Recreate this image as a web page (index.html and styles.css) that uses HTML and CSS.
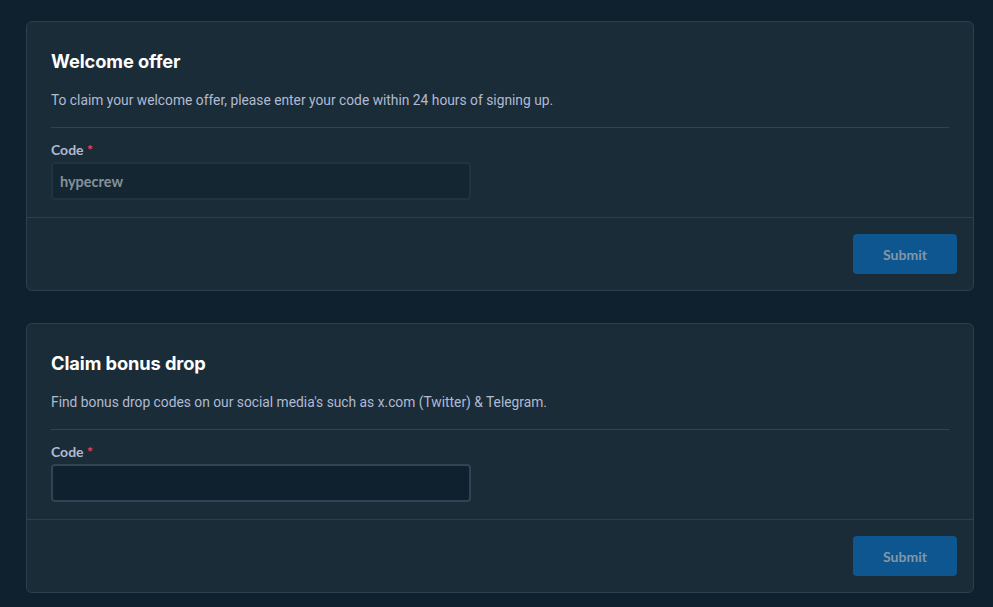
FILE: index.html
```html
<!DOCTYPE html>
<html lang="en">
<head>
<meta charset="utf-8">
<title>Offers</title>
<link rel="stylesheet" href="styles.css">
</head>
<body>
<main class="page">
  <section class="card">
    <div class="card-body">
      <h2 class="card-title">Welcome offer</h2>
      <p class="card-desc">To claim your welcome offer, please enter your code within 24 hours of signing up.</p>
      <hr class="divider">
      <label class="field">
        <span class="label">Code <span class="req">*</span></span>
        <input class="input input-disabled" type="text" value="hypecrew" disabled>
      </label>
    </div>
    <div class="card-footer">
      <button class="btn" disabled>Submit</button>
    </div>
  </section>
  <section class="card">
    <div class="card-body">
      <h2 class="card-title">Claim bonus drop</h2>
      <p class="card-desc">Find bonus drop codes on our social media's such as x.com (Twitter) &amp; Telegram.</p>
      <hr class="divider">
      <label class="field">
        <span class="label">Code <span class="req">*</span></span>
        <input class="input" type="text" value="">
      </label>
    </div>
    <div class="card-footer">
      <button class="btn" disabled>Submit</button>
    </div>
  </section>
</main>
</body>
</html>
```
FILE: styles.css
```css
* { box-sizing: border-box; }
html, body { margin: 0; padding: 0; }
body {
  background: #0f212e;
  font-family: Lato, "Liberation Sans", sans-serif;
  color: #b1bad3;
  height: 607px;
  overflow: hidden;
}
.page {
  padding: 21px 20px 0 26px;
  display: flex;
  flex-direction: column;
  gap: 32px;
}
.card {
  width: 948px;
  background: #1a2c38;
  border: 1px solid #2a404e;
  border-radius: 6px;
}
.card-body {
  padding: 26px 24px 17px 24px;
}
.card-title {
  margin: 0;
  font-family: Inter, Lato, sans-serif;
  font-weight: 700;
  font-size: 18.3px;
  line-height: 26px;
  color: #ffffff;
  letter-spacing: -0.1px;
}
.card-desc {
  margin: 16px 0 0 0;
  font-family: Roboto, "Liberation Sans", sans-serif;
  font-size: 13.8px;
  line-height: 20px;
  color: #b1bad3;
}
.divider {
  margin: 17px 0 0 0;
  border: 0;
  border-top: 1px solid #2f4553;
}
.field {
  display: flex;
  flex-direction: column;
  gap: 3px;
  margin-top: 13px;
}
.label {
  font-weight: 700;
  font-size: 14px;
  line-height: 18px;
  color: #b1bad3;
}
.req { color: #ed4163; }
.input {
  display: block;
  width: 420px;
  height: 38px;
  flex: 0 0 38px;
  border: 2px solid #2f4553;
  border-radius: 4px;
  background: #0f212e;
  color: #ffffff;
  font-family: Lato, sans-serif;
  font-weight: 700;
  font-size: 14.5px;
  padding: 0 7px;
  outline: none;
}
.input-disabled {
  background: #142631;
  border-color: #1f3442;
  color: #86919b;
}
.card-footer {
  border-top: 1px solid #2a404e;
  padding: 16px 16px 16px 24px;
  display: flex;
  justify-content: flex-end;
}
.btn {
  width: 104px;
  height: 40px;
  border: 0;
  border-radius: 4px;
  background: #0e568f;
  color: #8497a8;
  font-family: Lato, sans-serif;
  font-weight: 700;
  font-size: 14px;
}
```
